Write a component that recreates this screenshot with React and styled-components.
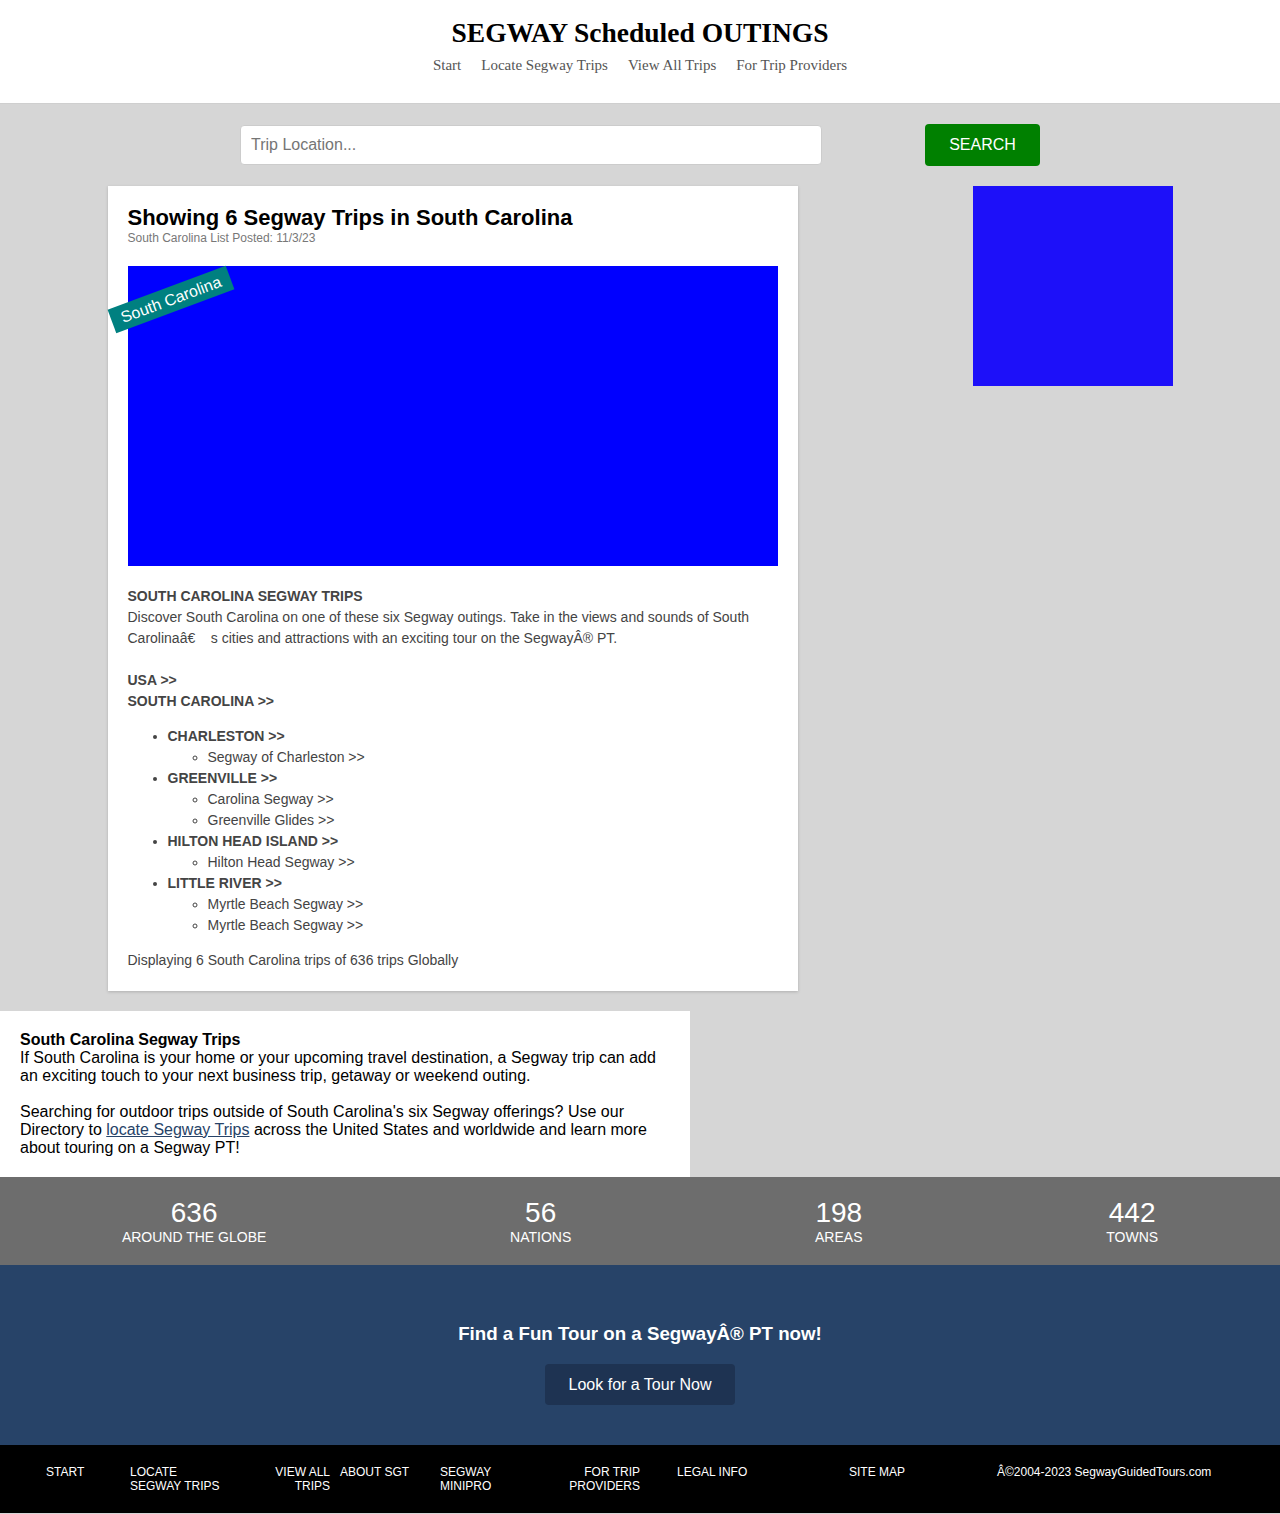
import React from "react";
import styled, { createGlobalStyle } from "styled-components";

const GlobalStyle = createGlobalStyle`
  body {
    margin: 0;
    background: #d6d6d6;
    font-family: "Liberation Sans", Arial, sans-serif;
  }
  * { box-sizing: border-box; }
`;

const regions = [
  {
    name: "CHARLESTON",
    trips: ["Segway of Charleston"],
  },
  {
    name: "GREENVILLE",
    trips: ["Carolina Segway", "Greenville Glides"],
  },
  {
    name: "HILTON HEAD ISLAND",
    trips: ["Hilton Head Segway"],
  },
  {
    name: "LITTLE RIVER",
    trips: ["Myrtle Beach Segway", "Myrtle Beach Segway"],
  },
];

const stats = [
  { value: "636", label: "AROUND THE GLOBE" },
  { value: "56", label: "NATIONS" },
  { value: "198", label: "AREAS" },
  { value: "442", label: "TOWNS" },
];

const footerLinks = [
  { label: "START", w: 84 },
  { label: "LOCATE SEGWAY TRIPS", w: 100 },
  { label: "VIEW ALL TRIPS", w: 60, ml: 40, right: true },
  { label: "ABOUT SGT", w: 100, ml: 10 },
  { label: "SEGWAY MINIPRO", w: 70 },
  { label: "FOR TRIP PROVIDERS", w: 75, ml: 55, right: true },
  { label: "LEGAL INFO", w: 172, ml: 37 },
  { label: "SITE MAP", w: 148 },
  { label: "Â©2004-2023 SegwayGuidedTours.com", w: 240, plain: true },
];

export default function App() {
  return (
    <>
      <GlobalStyle />
      <Header>
        <SiteTitle>SEGWAY Scheduled OUTINGS</SiteTitle>
        <Nav>
          <a>Start</a>
          <a>Locate Segway Trips</a>
          <a>View All Trips</a>
          <a>For Trip Providers</a>
        </Nav>
      </Header>

      <SearchRow>
        <SearchInput placeholder="Trip Location..." />
        <SearchButton>SEARCH</SearchButton>
      </SearchRow>

      <Content>
        <Card>
          <CardTitle>Showing 6 Segway Trips in South Carolina</CardTitle>
          <Posted>South Carolina List Posted: 11/3/23</Posted>
          <Hero>
            <Ribbon>South Carolina</Ribbon>
          </Hero>
          <Body>
            <b>SOUTH CAROLINA SEGWAY TRIPS</b>
            <br />
            Discover South Carolina on one of these six Segway outings. Take in
            the views and sounds of South Carolinaâ€{"\u00a0\u00a0\u00a0"} s
            cities and attractions with an exciting tour on the SegwayÂ® PT.
            <br />
            <br />
            <b>USA &gt;&gt;</b>
            <br />
            <b>SOUTH CAROLINA &gt;&gt;</b>
          </Body>
          <RegionList>
            {regions.map((r) => (
              <li key={r.name}>
                <b>{r.name} &gt;&gt;</b>
                <TripList>
                  {r.trips.map((t, i) => (
                    <li key={i}>{t} &gt;&gt;</li>
                  ))}
                </TripList>
              </li>
            ))}
          </RegionList>
          <Body>Displaying 6 South Carolina trips of 636 trips Globally</Body>
        </Card>
        <SideAd />
      </Content>

      <About>
        <b>South Carolina Segway Trips</b>
        <br />
        If South Carolina is your home or your upcoming travel destination, a
        Segway trip can add an exciting touch to your next business trip,
        getaway or weekend outing.
        <br />
        <br />
        Searching for outdoor trips outside of South Carolina's six Segway
        offerings? Use our Directory to <a>locate Segway Trips</a> across the
        United States and worldwide and learn more about touring on a Segway
        PT!
      </About>

      <Stats>
        {stats.map((s) => (
          <Stat key={s.label}>
            <StatValue>{s.value}</StatValue>
            <StatLabel>{s.label}</StatLabel>
          </Stat>
        ))}
      </Stats>

      <Cta>
        <CtaTitle>Find a Fun Tour on a SegwayÂ® PT now!</CtaTitle>
        <CtaButton>Look for a Tour Now</CtaButton>
      </Cta>

      <Footer>
        {footerLinks.map((f) => (
          <FooterItem
            key={f.label}
            $w={f.w}
            $ml={f.ml || 0}
            $right={f.right}
            $plain={f.plain}
          >
            {f.label}
          </FooterItem>
        ))}
      </Footer>
    </>
  );
}

const Header = styled.header`
  background: #fff;
  height: 104px;
  border-bottom: 1px solid #cfcfcf;
  padding-top: 17px;
  text-align: center;
`;

const SiteTitle = styled.h1`
  margin: 0;
  font-family: "Liberation Serif", "DejaVu Serif", serif;
  font-size: 27.5px;
  line-height: 32px;
  font-weight: bold;
  color: #000;
`;

const Nav = styled.nav`
  display: flex;
  justify-content: center;
  gap: 20px;
  margin-top: 7px;
  font-family: "Liberation Serif", "DejaVu Serif", serif;
  font-size: 15px;
  line-height: 18px;
  color: #555;
  a {
    cursor: pointer;
  }
`;

const SearchRow = styled.div`
  width: 800px;
  margin: 0 auto;
  padding-top: 20px;
  display: flex;
  justify-content: space-between;
  align-items: center;
`;

const SearchInput = styled.input`
  width: 582px;
  height: 40px;
  border: 1px solid #ccc;
  border-radius: 4px;
  padding: 0 10px;
  font-family: "Liberation Sans", Arial, sans-serif;
  font-size: 16px;
  color: #333;
  outline: none;
  &::placeholder {
    color: #757575;
  }
`;

const SearchButton = styled.button`
  width: 115px;
  height: 42px;
  border: none;
  border-radius: 4px;
  background: #008000;
  color: #fff;
  font-family: "Liberation Sans", Arial, sans-serif;
  font-size: 16px;
`;

const Content = styled.div`
  width: 1065px;
  margin: 20px auto 0;
  display: flex;
  justify-content: space-between;
  align-items: flex-start;
`;

const Card = styled.section`
  width: 690px;
  background: #fff;
  padding: 19px 20px 20px;
  box-shadow: 0 1px 3px rgba(0, 0, 0, 0.18);
  color: #444;
`;

const CardTitle = styled.h2`
  margin: 0;
  font-size: 22px;
  line-height: 26px;
  font-weight: bold;
  color: #000;
`;

const Posted = styled.div`
  font-size: 12px;
  line-height: 14px;
  color: #777;
`;

const Hero = styled.div`
  position: relative;
  height: 300px;
  margin: 21px 0 20px;
  background: #0000ff;
`;

const Ribbon = styled.div`
  position: absolute;
  left: -20px;
  top: 21px;
  width: 126px;
  height: 25px;
  background: #008080;
  color: #fff;
  font-size: 16px;
  line-height: 25px;
  text-align: center;
  transform: rotate(-20.4deg);
`;

const Body = styled.div`
  font-size: 14px;
  line-height: 21px;
  color: #444;
`;

const RegionList = styled.ul`
  margin: 14px 0;
  padding-left: 40px;
  font-size: 14px;
  line-height: 21px;
  list-style: disc;
`;

const TripList = styled.ul`
  margin: 0;
  padding-left: 40px;
  list-style: circle;
`;

const SideAd = styled.div`
  width: 200px;
  height: 200px;
  background: #1d10f9;
`;

const About = styled.section`
  width: 690px;
  margin-top: 20px;
  background: #fff;
  padding: 20px 20px 20px;
  font-size: 16px;
  line-height: 18px;
  color: #000;
  a {
    color: #274368;
    text-decoration: underline;
    cursor: pointer;
  }
`;

const Stats = styled.section`
  height: 88px;
  background: #6d6d6d;
  display: flex;
  justify-content: space-around;
  align-items: center;
  color: #fff;
`;

const Stat = styled.div`
  text-align: center;
`;

const StatValue = styled.div`
  font-size: 28px;
  line-height: 32px;
`;

const StatLabel = styled.div`
  font-size: 14px;
  line-height: 17px;
`;

const Cta = styled.section`
  background: #274368;
  padding: 58px 0 40px;
  text-align: center;
  color: #fff;
`;

const CtaTitle = styled.h3`
  margin: 0 0 19px;
  font-size: 18.72px;
  line-height: 22px;
  font-weight: bold;
`;

const CtaButton = styled.button`
  width: 190px;
  height: 41px;
  border: none;
  border-radius: 4px;
  background: #1e3352;
  color: #fff;
  font-family: "Liberation Sans", Arial, sans-serif;
  font-size: 16px;
`;

const Footer = styled.footer`
  background: #000;
  height: 68px;
  padding: 20px 0 0 46px;
  display: flex;
  align-items: flex-start;
  color: #fff;
  font-size: 12px;
  line-height: 14px;
`;

const FooterItem = styled.div`
  flex: none;
  width: ${(p) => p.$w}px;
  margin-left: ${(p) => p.$ml}px;
  text-align: ${(p) => (p.$right ? "right" : "left")};
  text-transform: ${(p) => (p.$plain ? "none" : "uppercase")};
  white-space: ${(p) => (p.$plain ? "nowrap" : "normal")};
`;
